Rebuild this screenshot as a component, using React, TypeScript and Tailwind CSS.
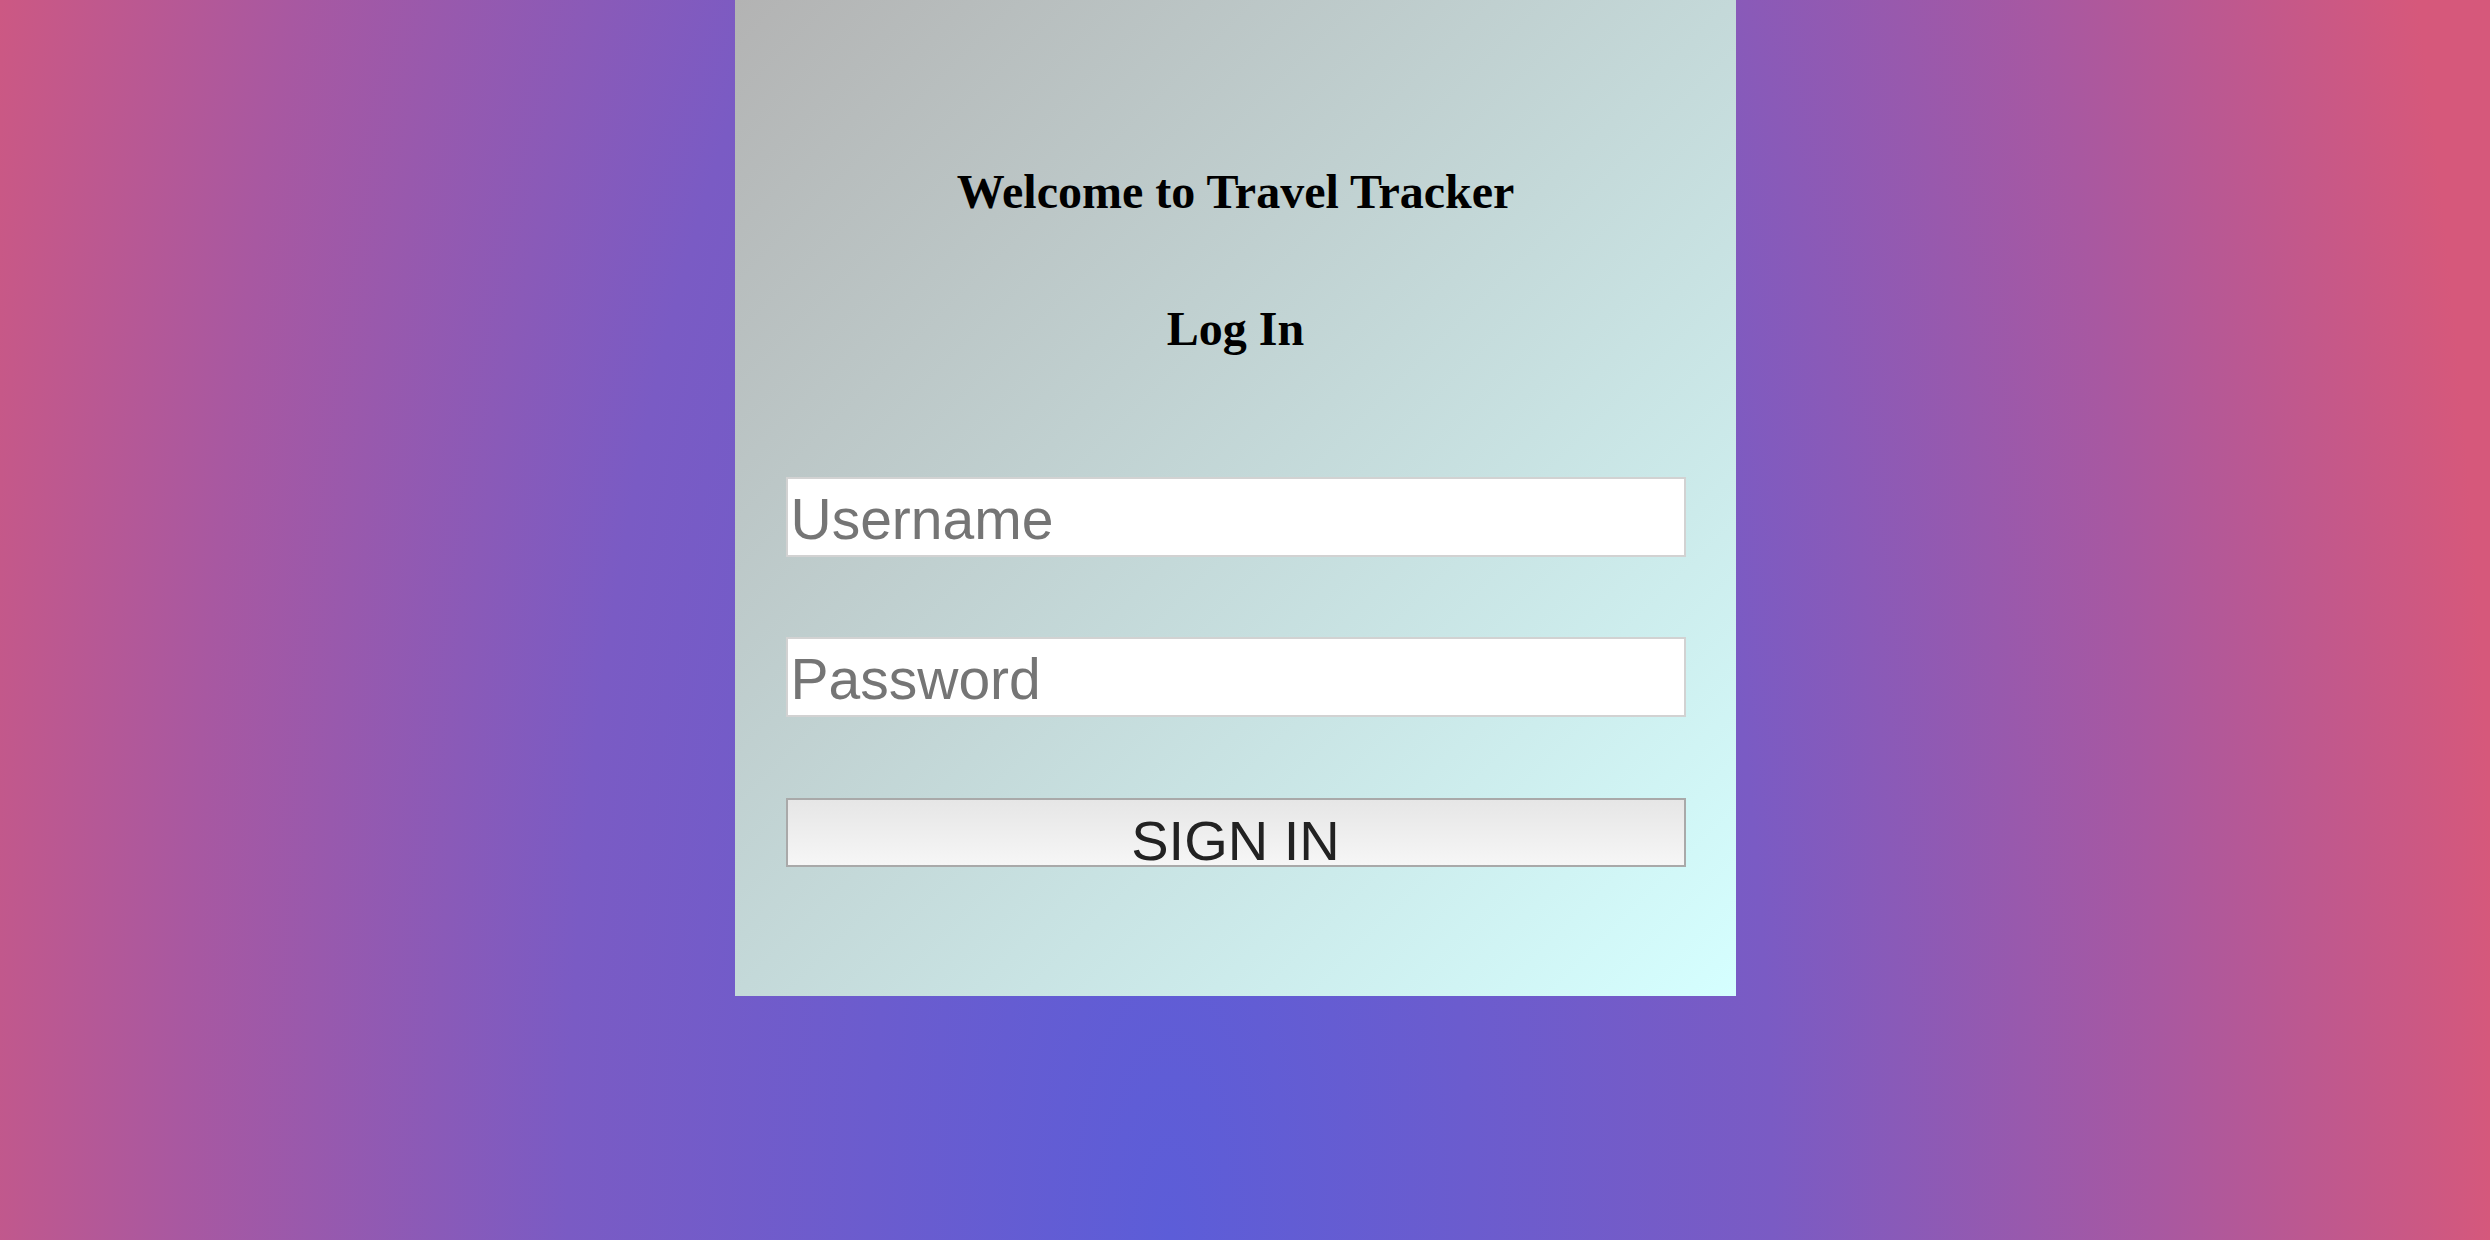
import React from "react";

/**
 * Travel Tracker login page
 * Gradient backdrop with a centered card holding the sign-in form
 */
export default function App() {
  return (
    <div className="w-full h-[1240px] overflow-hidden bg-[radial-gradient(ellipse_55%_300%_at_47%_100%,#5c5dd8_0%,#7a5bc4_44%,#a858a1_72%,#d6587b_97%)]">
      <div className="ml-[735px] w-[1001px] h-[996px] flex flex-col items-center bg-[linear-gradient(to_bottom_right,#b3b3b3,#d5ffff)]">
        <h1 className="mt-[165px] text-[48px] leading-[53px] font-bold text-black font-['Liberation_Serif',serif]">
          Welcome to Travel Tracker
        </h1>
        <h1 className="mt-[84px] text-[48px] leading-[53px] font-bold text-black font-['Liberation_Serif',serif]">
          Log In
        </h1>
        <form className="w-[900px] flex flex-col mt-[122px] font-['Liberation_Sans',Arial,sans-serif]">
          <input
            type="text"
            placeholder="Username"
            className="w-full h-[80px] bg-white border-2 border-[#d2d2d2] pt-[6px] pb-0 pl-[3px] pr-0 text-[57px] text-black placeholder:text-[#757575] outline-none"
          />
          <input
            type="password"
            placeholder="Password"
            className="w-full h-[80px] mt-[80px] bg-white border-2 border-[#d2d2d2] pt-[6px] pb-0 pl-[3px] pr-0 text-[57px] text-black placeholder:text-[#757575] outline-none"
          />
          <button
            type="button"
            className="w-full h-[69px] mt-[81px] border-2 border-[#a9a9a9] bg-[linear-gradient(to_bottom,#e6e6e6,#f6f6f6)] pt-[16px] pb-0 leading-[49px] text-[56px] text-[#222222]"
          >
            SIGN IN
          </button>
        </form>
      </div>
    </div>
  );
}
